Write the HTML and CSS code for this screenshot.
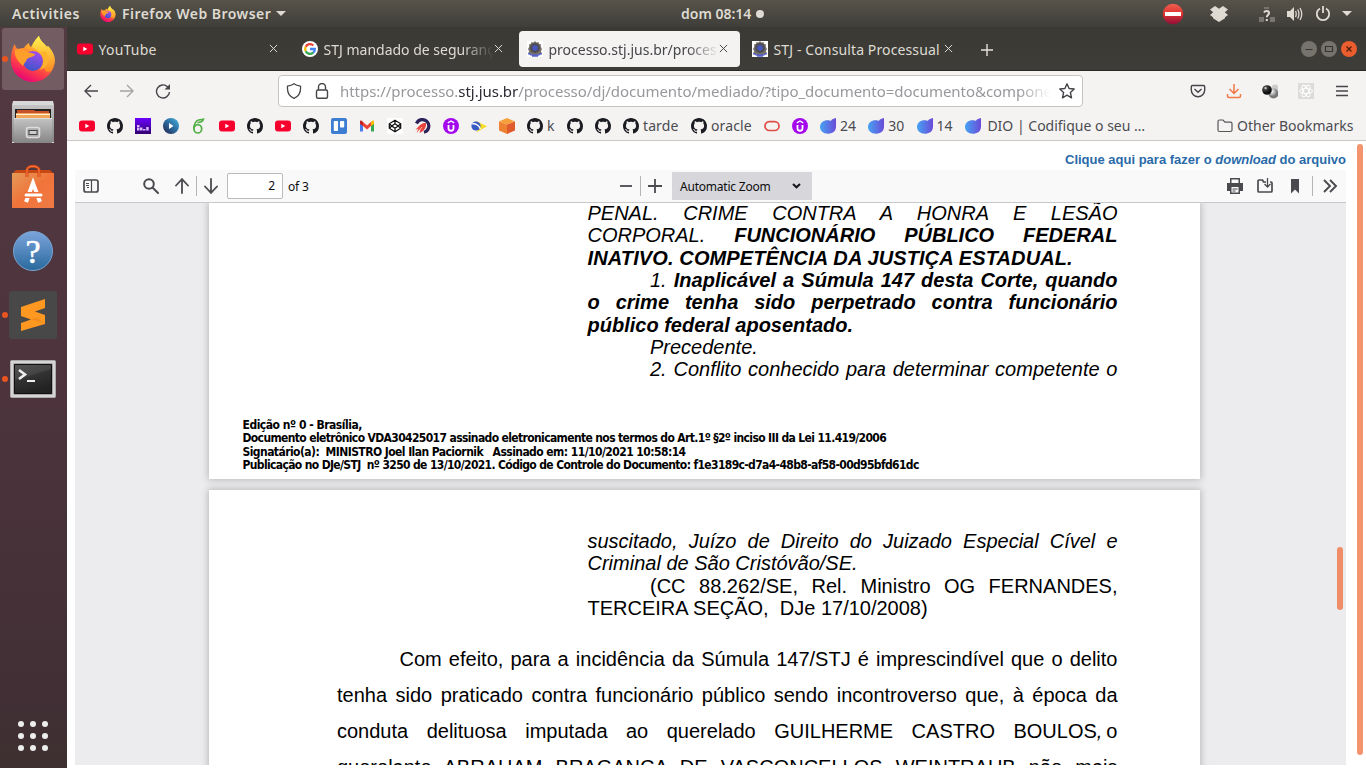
FILE: index.html
```html
<!DOCTYPE html>
<html lang="pt-BR">
<head>
<meta charset="utf-8">
<title>processo.stj.jus.br</title>
<link rel="stylesheet" href="styles.css">
</head>
<body>
<svg class="defs" aria-hidden="true">
  <defs>
    <linearGradient id="fx1" x1=".8" y1="0" x2=".3" y2="1"><stop offset="0" stop-color="#fff44f"/><stop offset=".35" stop-color="#ffa72b"/><stop offset=".68" stop-color="#ff4444"/><stop offset="1" stop-color="#e60078"/></linearGradient>
    <linearGradient id="fx2" x1=".7" y1="0" x2=".4" y2="1"><stop offset="0" stop-color="#a84df0"/><stop offset="1" stop-color="#3c55c8"/></linearGradient>
    <linearGradient id="fx3" x1="0" y1="0" x2="0" y2="1"><stop offset="0" stop-color="#fff34f"/><stop offset="1" stop-color="#ff8a22"/></linearGradient>
    <linearGradient id="leaf" x1="0" x2="1"><stop offset="0" stop-color="#45a3f3"/><stop offset="1" stop-color="#6b4bd8"/></linearGradient>
    <linearGradient id="purple" x1="0" y1="0" x2="0" y2="1"><stop offset="0" stop-color="#6a00ff"/><stop offset="1" stop-color="#32006f"/></linearGradient>
    <linearGradient id="silver" x1="0" y1="0" x2="0" y2="1"><stop offset="0" stop-color="#c4c4c4"/><stop offset="1" stop-color="#858585"/></linearGradient>
    <linearGradient id="orange" x1="0" y1="0" x2="1" y2="1"><stop offset="0" stop-color="#e59a58"/><stop offset=".5" stop-color="#f0743a"/><stop offset="1" stop-color="#f07a45"/></linearGradient>
    <linearGradient id="blue" x1="0" y1="0" x2="0" y2="1"><stop offset="0" stop-color="#7ba4dc"/><stop offset="1" stop-color="#29699c"/></linearGradient>
    <linearGradient id="term" x1="0" y1="0" x2=".4" y2="1"><stop offset="0" stop-color="#555"/><stop offset=".45" stop-color="#444"/><stop offset=".5" stop-color="#333"/><stop offset="1" stop-color="#222"/></linearGradient>
    <linearGradient id="play" x1="0" y1="1" x2="1" y2="0"><stop offset="0" stop-color="#224"/><stop offset=".5" stop-color="#2c6a9e"/><stop offset="1" stop-color="#46b4df"/></linearGradient>
    <linearGradient id="red" x1="0" y1="0" x2="0" y2="1"><stop offset="0" stop-color="#f0604f"/><stop offset=".5" stop-color="#dd3030"/><stop offset="1" stop-color="#8d0f38"/></linearGradient>
    <radialGradient id="ball" cx=".35" cy=".3"><stop offset="0" stop-color="#fff"/><stop offset=".35" stop-color="#444"/><stop offset="1" stop-color="#111"/></radialGradient>
    <radialGradient id="ball2" cx=".35" cy=".3"><stop offset="0" stop-color="#fff"/><stop offset="1" stop-color="#777"/></radialGradient>
  </defs>
  <symbol id="firefox" viewBox="0 0 46 46">
    <path fill="url(#fx1)" d="M5 8c0 2 1 4 3 5 2-1 4-1 6-1 1-2 3-4 5-5 0 2 1 3 2 4C24 5 27 2 29 0c1 5 5 7 8 11l1-1c4 4 7 9 7 15-1 12-11 21-22 21S1 37 1 25C1 18 2 12 5 8Z"/>
    <path fill="url(#fx3)" d="M22 11C24 5 27 2 29 0c1 5 5 7 8 11l1-1c6 7 7 15 4 24-4 4-9 1-8-6 0-9-5-13-12-17Z"/>
    <circle cx="23" cy="25" r="10" fill="url(#fx2)"/>
    <path fill="#ff9f2b" d="M5 14c4-2 9-1 12 2 3 1 6 1 8 2 0 3-6 3-8 5-1 3-3 4-4 7-5-5-9-9-8-16Z"/>
    <path fill="#ffb32d" d="M30 16c5 5 4 14-1 18 10-2 12-14 6-19Z"/>
  </symbol>
  <symbol id="youtube" viewBox="0 0 16 16"><rect x="0" y="2.500" width="16" height="11" rx="3" fill="#f8002e"/><path fill="#fff" d="M6.300 5.700v4.600L10.300 8Z"/></symbol>
  <symbol id="github" viewBox="0 0 16 16"><path fill="#1b1b22" d="M8 0C3.580 0 0 3.580 0 8c0 3.540 2.290 6.530 5.470 7.590.4.070.55-.17.55-.38 0-.19-.01-.82-.01-1.490-2.010.37-2.530-.49-2.690-.94-.09-.23-.48-.94-.82-1.130-.28-.15-.68-.52-.01-.53.63-.01 1.080.58 1.230.82.72 1.210 1.870.87 2.330.66.070-.52.28-.87.51-1.070-1.780-.2-3.640-.89-3.640-3.950 0-.87.31-1.590.82-2.150-.08-.2-.36-1.020.08-2.120 0 0 .67-.21 2.200.82.64-.18 1.320-.27 2-.27s1.360.09 2 .27c1.530-1.040 2.200-.82 2.200-.82.44 1.100.16 1.920.08 2.120.51.56.82 1.270.82 2.150 0 3.070-1.870 3.750-3.650 3.950.29.25.54.73.54 1.480 0 1.070-.01 1.930-.01 2.200 0 .21.15.46.55.38A8.010 8.010 0 0016 8c0-4.420-3.580-8-8-8z"/></symbol>
  <symbol id="bars" viewBox="0 0 16 16"><path fill="url(#purple)" d="M0 0h16v16H0z"/><path fill="#d9b8ff" d="M2 7h2.500v2H2zM2 9.500h2.500v3H2zM5 9.500h2.500v3H5zM8 11h2.500v1.500H8zM11.200 9h2.500v3.500h-2.500z"/></symbol>
  <symbol id="playc" viewBox="0 0 16 16"><circle cx="8" cy="8" r="8" fill="url(#play)"/><path fill="#fff" d="M6 5v6l4.500-3Z"/></symbol>
  <symbol id="six" viewBox="0 0 16 16"><g fill="none" stroke="#4fae42"><ellipse cx="6.800" cy="10.800" rx="3.900" ry="4.200" stroke-width="1.700"/><path stroke-width="1.500" d="M3 10.500C2.500 7 5 2.500 7.500 2c1.500-.3 3-.2 5-.8-.5 2-3 3.200-6 3.300"/></g></symbol>
  <symbol id="trello" viewBox="0 0 16 16"><rect width="16" height="16" rx="2" fill="#3d7ed3"/><rect x="2.800" y="3" width="4.200" height="10" rx=".8" fill="#fff"/><rect x="9" y="3" width="4.200" height="6.500" rx=".8" fill="#fff"/></symbol>
  <symbol id="gmail" viewBox="0 0 16 16"><path fill="#4a7cf0" d="M1 4v9.500h3V7Z"/><path fill="#35a853" d="M15 4v9.500h-3V7Z"/><path fill="#ea4335" d="m3.500 3.500 4.500 4 4.500-4V7.600L8 11.500l-4.500-4Z"/><path fill="#c5221f" d="M1 3c1-1 2 0 3 1v4L1 6Z"/><path fill="#fbbc04" d="M15 3c-1-1-2 0-3 1v4l3-2Z"/></symbol>
  <symbol id="codepen" viewBox="0 0 16 16"><path fill="#fff" d="M0 0h16v16H0z"/><path fill="none" stroke="#111" stroke-width="1.250" d="m8 2.300 5.700 3.500v4.400L8 13.700l-5.700-3.500V5.800ZM8 2.300v3.500m0 4.400v3.500M2.300 5.800 4.800 8l-2.500 2.200M13.700 5.800 11.200 8l2.500 2.200M8 5.800 11.200 8 8 10.200 4.800 8Z"/></symbol>
  <symbol id="rocket" viewBox="0 0 16 16"><path fill="none" stroke="#2b2058" stroke-width="3.200" d="M1.500 5.500a6.400 6.400 0 1 1 7.500 8.700"/><path fill="#e8443c" d="M11 5c-4-.5-6 1.500-10.500 7l3-1.500-2 4.500 4-4-1 4c4-1.500 7-5 6.500-10Z"/><path stroke="#fff" stroke-width=".6" d="m7 9-4 5"/></symbol>
  <symbol id="udemy" viewBox="0 0 16 16"><circle cx="8" cy="8" r="8" fill="#a408ed"/><path fill="none" stroke="#fff" stroke-width="1.800" d="M5.500 7v3.500c0 3 5 3 5 0V7"/><path fill="none" stroke="#fff" stroke-width="1.400" d="M4.800 4.900 8 3l3.200 1.900"/></symbol>
  <symbol id="brazil" viewBox="0 0 16 16"><path fill="#f7dc26" d="m4 2.500 12 5.700-11 6.300 4-6Z"/><circle cx="5" cy="8" r="4.600" fill="#385bc4"/><path fill="none" stroke="#fff" stroke-width="1.300" d="M1 6c3-1 7 1 8.500 5"/></symbol>
  <symbol id="cube" viewBox="0 0 16 16"><path fill="#f6a03b" d="m8 0 8 3.500-8 3-8-3Z"/><path fill="#ef8133" d="m0 3.500 8 3V16l-8-3.500Z"/><path fill="#df5b2d" d="m16 3.500-8 3V16l8-3.500Z"/></symbol>
  <symbol id="oval" viewBox="0 0 16 16"><rect x="1" y="3.700" width="14" height="8.800" rx="4.300" fill="none" stroke="#df4d47" stroke-width="1.700"/></symbol>
  <symbol id="dio" viewBox="0 0 16 16"><path fill="url(#leaf)" d="M0 8.800C0 5 3.500 2.300 7.500 2.300c1.800 0 2.700.4 3.500.5C11.500 1.200 13.800.5 16 0v8.500c0 4.500-3 7-7.500 7.200C3.500 16 0 13 0 8.800Z"/></symbol>
  <symbol id="google" viewBox="0 0 16 16"><circle cx="8" cy="8" r="8" fill="#fff"/><g fill="none" stroke-width="2.300"><path stroke="#ea4335" d="M3.700 5.800A4.800 4.800 0 0 1 11.300 4.500"/><path stroke="#fbbc05" d="M3.700 10.200a4.800 4.800 0 0 1 0-4.400"/><path stroke="#34a853" d="M11.200 11.600a4.800 4.800 0 0 1-7.500-1.400"/><path stroke="#4285f4" d="M8 8h4.800c0 1.500-.6 2.800-1.600 3.600"/></g></symbol>
  <symbol id="crest" viewBox="0 0 16 16"><path fill="#fff" d="M0 0h16v16H0z"/><path fill="#76706a" d="m8 0 1.500 1.500 2-.5.5 1.800 2 .7-.3 2L15 8l-1 2 .5 2.500-4 1.500H6l-4.500-1.500L2 10 1 8l1.300-2.500L2 3.500l2-.7L4.500 1l2 .5Z"/><circle cx="8" cy="7" r="4.900" fill="#4d4c55"/><circle cx="8" cy="7" r="2.700" fill="#4657c5"/><path fill="none" stroke="#5661cc" stroke-width="1.300" d="M1 12.500c2 0 2 1.500 4 1.500h6c2 0 2-1.500 4-1.500M5 15h6"/></symbol>
  <symbol id="x" viewBox="0 0 10 10"><path fill="none" stroke="currentColor" stroke-width="1.100" d="m1 1 8 8m0-8-8 8"/></symbol>
</svg>

<header class="topbar">
  <span class="activities">Activities</span>
  <svg class="i16 topbar-fox"><use href="#firefox"/></svg>
  <span class="appname">Firefox Web Browser</span>
  <i class="caret"></i>
  <span class="clock">dom 08:14</span><i class="clock-dot"></i>
  <div class="indicators">
    <svg width="22" height="22" viewBox="0 0 22 22"><circle cx="11" cy="11" r="10.300" fill="url(#red)"/><rect x="3" y="9" width="16" height="4" fill="#fff"/></svg>
    <svg class="dropbox" width="18" height="16" viewBox="0 0 18 16"><path fill="#dfdbd2" d="m5 0 4 2.800L13 0l5 3.500-3.200 2.700L18 9l-3 2.200v1L9 16l-6-3.800v-1L0 9l3.200-2.800L0 3.500Z"/></svg>
    <svg class="network" width="16" height="16" viewBox="0 0 16 16"><path fill="#77756e" d="M5 1h5v2H5zM0 11h5v5H0zM11 11h5v5h-5z"/><path fill="none" stroke="#dfdbd2" stroke-width="2" d="M5 6.500C6 4.500 10 4.500 10 7c0 2-2.200 2-2.200 4.200M7.800 13v2"/></svg>
    <svg class="sound" width="16" height="16" viewBox="0 0 16 16"><path fill="#dfdbd2" d="M0 5h3l4-4v14l-4-4H0z"/><path fill="none" stroke="#dfdbd2" stroke-width="1.300" d="M8.500 5q1.500 3 0 6M10.700 3.500q2.500 4.500 0 9M13 2q3.500 6 0 12"/></svg>
    <svg class="power" width="16" height="16" viewBox="0 0 16 16"><path fill="none" stroke="#dfdbd2" stroke-width="1.800" d="M5 2.500a6.200 6.200 0 1 0 6 0M8 0v7"/></svg>
    <i class="caret"></i>
  </div>
</header>

<div class="desktop">
<aside class="dock">
  <div class="tile active running"><svg class="fox-big"><use href="#firefox"/></svg></div>
  <div class="tile"><svg width="44" height="46" viewBox="0 0 44 46"><path fill="#d8d8d8" d="M2 1h40l1 4v38H1V5Z"/><path fill="url(#silver)" d="M1 5h42v37H1z"/><path fill="#222" d="M4 9h36v10H4z"/><path fill="#c7522a" d="M6 10h17l1 1h14v2H6z"/><path fill="#f2a65a" d="M5 13h34v5H5z"/><path fill="#fff2d8" d="M5 14h34v1H5z"/><path fill="url(#silver)" d="M3 18h38v25H3z"/><path fill="#ddd" d="M3 18h38v1H3z"/><rect x="15.500" y="27.500" width="13" height="10" rx="2" fill="#aaa" stroke="#ddd" stroke-width="1.500"/><rect x="18" y="30.500" width="8" height="4" fill="#ccc" stroke="#444"/></svg></div>
  <div class="tile"><svg width="44" height="46" viewBox="0 0 44 46"><path fill="#c84814" d="m1 10 4-4h34l4 4v4H1z"/><path fill="url(#orange)" d="M1 9h42v35H1z"/><path fill="none" stroke="#d5450f" stroke-width="3" d="M16 13V6c0-5 12-5 12 0v7"/><path fill="none" stroke="#f48150" stroke-width="1" d="M16 13V6c0-5 12-5 12 0v7"/><path fill="none" stroke="#fff" stroke-width="4" d="m15 38 7-19 7 19"/><path stroke="#f0743a" stroke-width="6" d="M13 31h18"/><path stroke="#fff" stroke-width="3" stroke-linecap="round" d="M15 31h15"/></svg></div>
  <div class="tile"><svg width="42" height="42" viewBox="0 0 42 42"><circle cx="21" cy="21" r="19.500" fill="url(#blue)" stroke="#7aa3d0"/><text x="21" y="33" text-anchor="middle" class="help-mark">?</text></svg></div>
  <div class="tile running"><svg width="48" height="48" viewBox="0 0 48 48"><rect width="48" height="48" rx="3" fill="#484848"/><path fill="#ff9820" d="M12 16 36 8v9l-10 3.500 10 3.500v9l-24 7v-8l10-3.500-10-3.500Z"/><path fill="#dd7d16" d="m22 28.500 6-2 8 6Z" opacity=".4"/></svg></div>
  <div class="tile running"><svg width="46" height="38" viewBox="0 0 46 38"><rect x=".5" y=".5" width="45" height="37" rx="1" fill="#d6d5d4" stroke="#aaa"/><path fill="#777" d="M3.500 3.500h39v31h-39z"/><path fill="url(#term)" stroke="#111" d="M4.500 4.500h37v29h-37z"/><path fill="none" stroke="#eee" stroke-width="2.600" d="m9 10 6 4.500L9 19"/><path fill="#eee" d="M17 20h8v2h-8z"/></svg></div>
  <div class="apps"><i></i><i></i><i></i><i></i><i></i><i></i><i></i><i></i><i></i></div>
</aside>

<main class="browser">
  <div class="tabs">
    <div class="tab"><svg class="i16"><use href="#youtube"/></svg><span class="tab-title t-yt">YouTube</span><svg class="close"><use href="#x"/></svg></div>
    <div class="tab"><svg class="i16"><use href="#google"/></svg><span class="tab-title fade">STJ mandado de seguranç</span><svg class="close"><use href="#x"/></svg></div>
    <div class="tab selected"><svg class="i16"><use href="#crest"/></svg><span class="tab-title fade">processo.stj.jus.br/proces</span><svg class="close"><use href="#x"/></svg></div>
    <div class="tab"><svg class="i16"><use href="#crest"/></svg><span class="tab-title t-cons">STJ - Consulta Processual</span><svg class="close"><use href="#x"/></svg></div>
    <svg class="newtab" width="12" height="12" viewBox="0 0 12 12"><path stroke="#e5e2dc" stroke-width="1.400" d="M6 0v12M0 6h12"/></svg>
    <div class="winbtns">
      <svg class="i16" viewBox="0 0 16 16"><circle cx="8" cy="8" r="8" fill="#75736b"/><path stroke="#35342f" d="M4.500 8.500h7"/></svg>
      <svg class="i16" viewBox="0 0 16 16"><circle cx="8" cy="8" r="8" fill="#75736b"/><path fill="none" stroke="#35342f" stroke-width="1.200" d="M4.500 5.500h7v5h-7z"/></svg>
      <svg class="i16" viewBox="0 0 16 16"><circle cx="8" cy="8" r="8" fill="#ea5d2e"/><path stroke="#4a1d0c" stroke-width="1.200" d="m5.500 5.500 5 5m0-5-5 5"/></svg>
    </div>
  </div>

  <div class="nav">
    <svg class="i16" viewBox="0 0 16 16"><path fill="none" stroke="#45454a" stroke-width="1.400" d="M15 8H2m6-6L2 8l6 6"/></svg>
    <svg class="i16 dim" viewBox="0 0 16 16"><path fill="none" stroke="#45454a" stroke-width="1.400" d="M1 8h13M8 2l6 6-6 6"/></svg>
    <svg class="i16" viewBox="0 0 16 16"><path fill="none" stroke="#45454a" stroke-width="1.400" d="M14.500 9a6.500 6.500 0 1 1-2-5.300L14 5.200"/><path fill="#45454a" d="M15 1v5.500H9.500Z"/></svg>
    <div class="urlbar">
      <svg class="i16" viewBox="0 0 16 16"><path fill="none" stroke="#45454a" stroke-width="1.300" d="M8 .8c2 1.500 4 2 6.500 2.400C15 9 12.500 13.500 8 15.300 3.500 13.500 1 9 1.500 3.200 4 2.800 6 2.300 8 .8Z"/></svg>
      <svg class="i16 lock" viewBox="0 0 16 16"><rect x="2.500" y="7" width="11" height="8.300" rx="1.500" fill="none" stroke="#45454a" stroke-width="1.400"/><path fill="none" stroke="#45454a" stroke-width="1.400" d="M4.500 7V4a3.500 3.500 0 0 1 7 0v3"/></svg>
      <span class="url fade">https://processo.<b>stj.jus.br</b>/processo/dj/documento/mediado/?tipo_documento=documento&amp;compone</span>
      <svg class="i16" viewBox="0 0 16 16"><path fill="none" stroke="#45454a" stroke-width="1.400" stroke-linejoin="round" d="m8 .8 2.100 4.700 5.100.5-3.800 3.500 1.100 5.300L8 12.200l-4.500 2.600 1.100-5.300L.8 6l5.100-.5Z"/></svg>
    </div>
    <div class="nav-right">
      <svg class="i16" viewBox="0 0 16 16"><path fill="none" stroke="#45454a" stroke-width="1.400" d="M2.500 2.500h11q1.200 0 1.200 1.200V7a6.700 6.700 0 0 1-13.400 0V3.700q0-1.200 1.200-1.200ZM4.500 6 8 9.300 11.500 6"/></svg>
      <svg class="i16" viewBox="0 0 16 16"><path fill="none" stroke="#f07746" stroke-width="1.500" d="M8 1v9.500M3.500 6 8 10.500 12.500 6M1.500 11v2q0 1.500 1.500 1.500h10q1.500 0 1.500-1.500v-2"/></svg>
      <svg class="i16" viewBox="0 0 16 16"><circle cx="13" cy="5" r="3.500" fill="#ccc"/><circle cx="11.500" cy="10.500" r="5" fill="url(#ball2)"/><circle cx="5" cy="7" r="4.800" fill="url(#ball)"/></svg>
      <svg class="i16" viewBox="0 0 16 16"><path fill="#dcdbda" d="M0 0h16v16H0z"/><g fill="none" stroke="#fff"><ellipse cx="8" cy="8" rx="6.500" ry="2.600"/><ellipse cx="8" cy="8" rx="6.500" ry="2.600" transform="rotate(60 8 8)"/><ellipse cx="8" cy="8" rx="6.500" ry="2.600" transform="rotate(120 8 8)"/></g></svg>
      <svg class="i16" viewBox="0 0 16 16"><path stroke="#45454a" stroke-width="1.300" d="M2 3.500h12M2 8h12M2 12.500h12"/></svg>
    </div>
  </div>

  <div class="bookmarks">
    <svg class="i16"><use href="#youtube"/></svg>
    <svg class="i16"><use href="#github"/></svg>
    <svg class="i16"><use href="#bars"/></svg>
    <svg class="i16"><use href="#playc"/></svg>
    <svg class="i16"><use href="#six"/></svg>
    <svg class="i16"><use href="#youtube"/></svg>
    <svg class="i16"><use href="#github"/></svg>
    <svg class="i16"><use href="#youtube"/></svg>
    <svg class="i16"><use href="#github"/></svg>
    <svg class="i16"><use href="#trello"/></svg>
    <svg class="i16"><use href="#gmail"/></svg>
    <svg class="i16"><use href="#codepen"/></svg>
    <svg class="i16"><use href="#rocket"/></svg>
    <svg class="i16"><use href="#udemy"/></svg>
    <svg class="i16"><use href="#brazil"/></svg>
    <svg class="i16"><use href="#cube"/></svg>
    <span class="bm bm-k"><svg class="i16"><use href="#github"/></svg>k</span>
    <svg class="i16"><use href="#github"/></svg>
    <svg class="i16"><use href="#github"/></svg>
    <span class="bm bm-tarde"><svg class="i16"><use href="#github"/></svg>tarde</span>
    <span class="bm bm-oracle"><svg class="i16"><use href="#github"/></svg>oracle</span>
    <svg class="i16"><use href="#oval"/></svg>
    <svg class="i16"><use href="#udemy"/></svg>
    <span class="bm bm-num"><svg class="i16"><use href="#dio"/></svg>24</span>
    <span class="bm bm-num"><svg class="i16"><use href="#dio"/></svg>30</span>
    <span class="bm bm-num"><svg class="i16"><use href="#dio"/></svg>14</span>
    <span class="bm bm-dio"><svg class="i16"><use href="#dio"/></svg>DIO | Codifique o seu …</span>
    <span class="bm bm-other"><svg class="i16" viewBox="0 0 16 16"><path fill="none" stroke="#55555a" stroke-width="1.200" d="M1 3.500q0-1.500 1.500-1.500H6l2 2.200h5.500q1.500 0 1.500 1.500V12q0 1.500-1.500 1.500h-11Q1 13.500 1 12Z"/></svg>Other Bookmarks</span>
  </div>

  <div class="content">
    <div class="column">
      <p class="download">Clique aqui para fazer o <em>download</em> do arquivo</p>
      <section class="frame">
        <div class="pdfbar">
          <div class="pdf-left">
            <svg class="i16" viewBox="0 0 16 16"><rect x="1" y="2" width="14" height="12" rx="2" fill="none" stroke="#4a4a4f" stroke-width="1.700"/><path stroke="#4a4a4f" d="M8.500 2v12M3 5.500h3M3 7.500h3M4 9.500h2" stroke-width="1.200"/></svg>
            <svg class="i16 search" viewBox="0 0 16 16"><circle cx="6" cy="6" r="4.800" fill="none" stroke="#4a4a4f" stroke-width="2"/><path stroke="#4a4a4f" stroke-width="2" stroke-linecap="round" d="m10 10 5 5"/></svg>
            <svg class="i16 up" viewBox="0 0 16 16"><path fill="none" stroke="#4a4a4f" stroke-width="1.800" stroke-linecap="round" stroke-linejoin="round" d="M8 15V1M2 7.500 8 1.200l6 6.300"/></svg>
            <i class="sep"></i>
            <svg class="i16 down" viewBox="0 0 16 16"><path fill="none" stroke="#4a4a4f" stroke-width="1.800" stroke-linecap="round" stroke-linejoin="round" d="M8 1v14M2 8.500l6 6.300 6-6.300"/></svg>
            <span class="pagenum">2</span><span class="pagetotal">of 3</span>
          </div>
          <div class="pdf-mid">
            <svg class="i16" viewBox="0 0 16 16"><path stroke="#4a4a4f" stroke-width="1.800" d="M2 8h12"/></svg>
            <i class="sep"></i>
            <svg class="i16" viewBox="0 0 16 16"><path stroke="#4a4a4f" stroke-width="1.800" d="M1 8h14M8 1v14"/></svg>
            <span class="zoom"><span>Automatic Zoom</span><svg width="9" height="6" viewBox="0 0 9 6"><path fill="none" stroke="#15141a" stroke-width="2" d="m1 1 3.500 3.300L8 1"/></svg></span>
          </div>
          <div class="pdf-right">
            <svg class="i16" viewBox="0 0 16 16"><path fill="#4a4a4f" d="M3 0h10v5h3v8h-3v3H3v-3H0V5h3Z"/><path fill="#f9f9fa" d="M4.500 1.500h7V5h-7zM4.500 9h7v5.500h-7z"/><path stroke="#4a4a4f" stroke-width="1.200" d="M5.500 11h5M5.500 13h3"/></svg>
            <svg class="i16" viewBox="0 0 16 16"><path fill="none" stroke="#4a4a4f" stroke-width="1.700" d="M9 4H6.500L5.500 2H2Q1 2 1 3v10q0 1 1 1h12q1 0 1-1V5q0-1-1-1h-1"/><path fill="none" stroke="#4a4a4f" stroke-width="1.300" d="M10.500 0v9M7.500 6l3 3 3-3"/></svg>
            <svg class="i16" viewBox="0 0 16 16"><path fill="#4a4a4f" d="M4 1h8v14.500l-4-4-4 4Z"/></svg>
            <i class="sep"></i>
            <svg class="i16" viewBox="0 0 16 16"><path fill="none" stroke="#4a4a4f" stroke-width="1.900" d="m2 2 6 6-6 6M8 2l6 6-6 6"/></svg>
          </div>
        </div>
        <div class="viewer">
          <article class="sheet sheet-a">
            <div class="quote quote-a">
              <p class="ln"><em>PENAL. CRIME CONTRA A HONRA E LESÃO</em></p>
              <p class="ln"><em>CORPORAL. <b>FUNCIONÁRIO PÚBLICO FEDERAL</b></em></p>
              <p class="ln end wide"><em><b>INATIVO. COMPETÊNCIA DA JUSTIÇA ESTADUAL.</b></em></p>
              <p class="ln ind"><em>1. <b>Inaplicável a Súmula 147 desta Corte, quando</b></em></p>
              <p class="ln"><em><b>o crime tenha sido perpetrado contra funcionário</b></em></p>
              <p class="ln end"><em><b>público federal aposentado.</b></em></p>
              <p class="ln ind end"><em>Precedente.</em></p>
              <p class="ln ind"><em>2. Conflito conhecido para determinar competente o</em></p>
            </div>
            <div class="sign">
              <p class="s1">Edição nº 0 - Brasília,</p>
              <p class="s2">Documento eletrônico VDA30425017 assinado eletronicamente nos termos do Art.1º §2º inciso III da Lei 11.419/2006</p>
              <p class="s3">Signatário(a):&nbsp; MINISTRO Joel Ilan Paciornik&nbsp;&nbsp; Assinado em: 11/10/2021 10:58:14</p>
              <p class="s4">Publicação no DJe/STJ&nbsp; nº 3250 de 13/10/2021. Código de Controle do Documento: f1e3189c-d7a4-48b8-af58-00d95bfd61dc</p>
            </div>
          </article>
          <article class="sheet sheet-b">
            <div class="quote">
              <p class="ln"><em>suscitado, Juízo de Direito do Juizado Especial Cível e</em></p>
              <p class="ln end"><em>Criminal de São Cristóvão/SE.</em></p>
              <p class="ln ind">(CC 88.262/SE, Rel. Ministro OG FERNANDES,</p>
              <p class="ln end">TERCEIRA SEÇÃO,&nbsp; DJe 17/10/2008)</p>
            </div>
            <div class="para">
              <p class="ln ind">Com efeito, para a incidência da Súmula 147/STJ é imprescindível que o delito</p>
              <p class="ln">tenha sido praticado contra funcionário público sendo incontroverso que, à época da</p>
              <p class="ln">conduta delituosa imputada ao querelado GUILHERME CASTRO BOULOS<em>,</em>&thinsp;o</p>
              <p class="ln">querelante ABRAHAM BRAGANÇA DE VASCONCELLOS WEINTRAUB não mais</p>
            </div>
          </article>
          <i class="thumb"></i>
        </div>
      </section>
    </div>
    <i class="page-thumb"></i>
  </div>
</main>
</div>
</body>
</html>
```
FILE: styles.css
```css
* { box-sizing: border-box; }
body { margin: 0; width: 1366px; height: 768px; overflow: hidden; background: #fff; font-family: "Noto Sans", "Open Sans", sans-serif; display: flex; flex-direction: column; }
p { margin: 0; }
svg { display: block; flex: none; }
i { display: block; flex: none; }
.defs { position: absolute; width: 0; height: 0; }
.i16 { width: 16px; height: 16px; }

.topbar { flex: none; height: 27px; display: flex; align-items: center; padding: 0 14px 0 12px; background: linear-gradient(#57534a, #3f3e39); color: #dfdbd2; font-size: 14px; font-weight: 600; white-space: nowrap; }
.activities { width: 88px; letter-spacing: .55px; }
.topbar-fox { margin-right: 6px; }
.appname { width: 154px; letter-spacing: .47px; }
.caret { width: 0; height: 0; border: 5px solid transparent; border-top-color: #dfdbd2; border-bottom: 0; }
.clock { margin-left: 395px; width: 75px; }
.clock-dot { width: 8px; height: 8px; border-radius: 50%; background: #dfdbd2; }
.indicators { margin-left: auto; display: flex; align-items: center; }
.dropbox { margin-left: 26px; }
.network { margin-left: 31px; }
.sound { margin-left: 12px; }
.power { margin-left: 12px; margin-right: 11px; }

.desktop { flex: 1; min-height: 0; display: flex; }
.dock { width: 67px; flex: none; padding: 1px 2px 17px; display: flex; flex-direction: column; gap: 2px; background: linear-gradient(#533a42, #4d343c 50%, #412f35 90%, #3e3031); }
.tile { position: relative; width: 62px; height: 62px; border-radius: 3px; display: flex; align-items: center; justify-content: center; }
.tile.active { background: #735d63; }
.tile.running::before { content: ""; position: absolute; left: 0; top: 28px; width: 6px; height: 6px; border-radius: 50%; background: #ea5420; }
.tile:last-of-type { margin-top: 1px; }
.fox-big { width: 46px; height: 46px; }
.help-mark { font: 34px "Liberation Serif", serif; fill: #fff; stroke: #fff; stroke-width: .6; }
.apps { margin: auto 0 0 16px; display: grid; grid-template-columns: repeat(3, 6px); gap: 6px; }
.apps i { width: 6px; height: 6px; border-radius: 50%; background: #eee; }

.browser { flex: 1; min-width: 0; display: flex; flex-direction: column; }
.tabs { flex: none; height: 44px; background: linear-gradient(#3a3934, #3e3d39); border-bottom: 1px solid #2a2926; display: flex; gap: 4px; padding: 4px 9px 3px 2px; color: #dfdbd2; font-size: 14px; white-space: nowrap; }
.tab { width: 221px; height: 36px; flex: none; padding: 0 12px 0 8px; display: flex; align-items: center; border-radius: 4px; }
.tab.selected { background: #f4f3f2; color: #45454a; }
.tab-title { margin-left: 5.500px; flex: none; width: 170px; }
.t-yt { letter-spacing: .22px; }
.t-cons { letter-spacing: .12px; }
.fade { -webkit-mask-image: linear-gradient(to left, transparent, #000 32px); mask-image: linear-gradient(to left, transparent, #000 32px); }
.close { width: 9px; height: 9px; margin: -1px 0 0 auto; }
.newtab { margin: 13px 0 0 12px; }
.winbtns { margin: 10px 0 0 auto; display: flex; gap: 4px; }

.nav { flex: none; height: 40px; background: #f4f3f2; display: flex; align-items: center; padding: 0 16px; gap: 20px; }
.dim { opacity: .45; }
.urlbar { margin-left: 87px; width: 805px; height: 32px; border: 1px solid #c6c4c3; border-radius: 4px; background: #fff; display: flex; align-items: center; padding: 0 7px; }
.lock { margin-left: 12px; margin-right: 10px; }
.url { flex: none; width: 711px; white-space: nowrap; font-size: 15px; letter-spacing: -.04px; color: #98989c; margin-right: 8px; }
.url b { font-weight: 400; color: #2b2a33; }
.nav-right { margin-left: auto; display: flex; gap: 20px; }

.bookmarks { flex: none; height: 30px; background: #f4f3f2; border-bottom: 1px solid #cbc9c7; display: flex; align-items: center; gap: 12px; padding: 0 10px 0 12px; font-size: 14px; color: #4b4b50; white-space: nowrap; }
.bm { display: flex; align-items: center; gap: 4px; flex: none; }
.bm-k { width: 28px; }
.bm-tarde { width: 56px; letter-spacing: .1px; }
.bm-oracle { width: 61px; letter-spacing: .1px; }
.bm-num { width: 36.300px; }
.bm-dio { width: 181px; gap: 6.500px; }
.bm-other { margin-left: auto; width: 139px; }

.content { flex: 1; min-height: 0; background: #fff; display: flex; padding: 0 3px 0 8px; }
.column { width: 1271px; display: flex; flex-direction: column; padding-bottom: 3px; }
.download { height: 29px; padding: 10px 0 0; text-align: right; font: bold 13px/18px "Liberation Sans", Arial, sans-serif; color: #2a6aa8; }
.page-thumb { width: 6px; height: 611px; margin: 3px 0 0 auto; border-radius: 3px; background: #f4956f; }

.frame { flex: 1; min-height: 0; display: flex; flex-direction: column; }
.pdfbar { flex: none; height: 33px; background: #f9f9fa; border-bottom: 1px solid #c8c8ca; display: flex; align-items: center; color: #0c0c0d; font-size: 12px; }
.sep { width: 1px; height: 20px; background: #b5b5b7; }
.pdf-left { width: 543px; padding-left: 8px; display: flex; align-items: center; }
.search { margin-left: 44px; }
.up { margin: 0 6px 0 15px; }
.down { margin: 0 8px 0 6px; }
.pagenum { width: 56px; height: 26px; border: 1px solid #bbbbbc; border-radius: 2px; background: #fff; text-align: right; padding: 3px 7px 0 0; }
.pagetotal { margin-left: 5px; letter-spacing: -.15px; }
.pdf-mid { display: flex; align-items: center; gap: 6px; }
.zoom { width: 140px; height: 28px; border-radius: 1px; margin-left: 3px; background: #d7d7db; display: flex; align-items: center; justify-content: space-between; padding: 0 11px 0 8px; white-space: nowrap; letter-spacing: -.22px; }
.pdf-right { margin-left: auto; padding-right: 8px; display: flex; align-items: center; gap: 14px; }
.pdf-right .sep { margin: 0 -5px; }

.viewer { position: relative; flex: 1; min-height: 0; overflow: hidden; background: #ececee; padding-left: 134px; }
.sheet { width: 991px; background: #fff; box-shadow: 0 0 7px 1px rgba(0,0,0,.22); color: #000; font-family: "Liberation Sans", Arial, sans-serif; font-size: 20px; }
.sheet-a { display: flow-root; height: 276px; }
.sheet-b { height: 400px; margin-top: 11px; padding-top: 40px; }
.quote { margin-left: 378.500px; width: 530px; line-height: 22.330px; }
.quote-a { height: 213px; margin-top: -1px; margin-bottom: 1px; }
.ln { text-align: justify; text-align-last: justify; }
.ln.end { text-align-last: left; white-space: nowrap; }
.ln.wide { letter-spacing: .12px; }
.quote .ind, .para .ind { padding-left: 62.500px; }
.para { margin: 22px 0 0 128px; width: 780.500px; line-height: 36px; }
.sign { padding: 3px 0 0 33.500px; font: bold 12px/13.300px "DejaVu Sans Condensed", "DejaVu Sans", sans-serif; font-stretch: condensed; white-space: nowrap; }
.s1 { letter-spacing: -.48px; }
.s2 { letter-spacing: -.63px; }
.s3 { letter-spacing: -.56px; }
.s4 { letter-spacing: -.64px; }
.thumb { position: absolute; left: 1262px; top: 344px; width: 6px; height: 63px; border-radius: 3px; background: #f08d69; }
```
